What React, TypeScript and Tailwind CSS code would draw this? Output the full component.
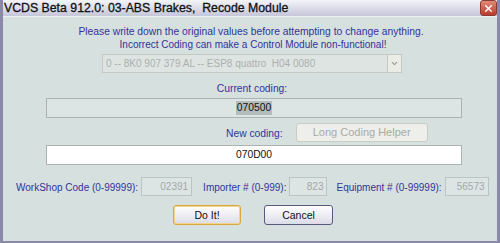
import { ChevronDown, X } from "lucide-react"

const field = "h-[19px] shrink-0 border border-[#b9c4c3] bg-[#dde5e4] pr-[3px] text-right text-[10px] leading-[17px] text-[#a3a8a8]"

export default function App() {
  return (
    <div className="flex h-[243px] w-[500px] flex-col overflow-hidden border-x-[3px] border-b-[2px] border-[#8a8aa8] bg-[#d6e0df] font-['Liberation_Sans',Arial,sans-serif]">
      {/* title bar */}
      <div className="flex h-[17px] shrink-0 items-center justify-between border-b border-[#eef0f4] bg-gradient-to-b from-[#f4f4fa] to-[#c6c6da]">
        <span className="pl-[1px] text-[12.3px] leading-none text-[#111] [-webkit-text-stroke:0.3px_#111]">
          VCDS Beta 912.0: 03-ABS Brakes,&nbsp; Recode Module
        </span>
        <div className="flex h-[16px] w-[17px] items-center justify-center rounded-[3px] border border-[#8a3a32] bg-gradient-to-b from-[#e08a78] to-[#b8392a]">
          <X className="h-[11px] w-[11px] text-white" strokeWidth={3} />
        </div>
      </div>

      <div className="flex flex-1 flex-col whitespace-nowrap text-[10.3px] text-[#33339a]">
        <p className="mt-[8px] pl-[2px] text-center leading-[13px]">
          Please write down the original values before attempting to change anything.
        </p>
        <p className="pl-[6px] text-center text-[10px] leading-[13px]">
          Incorrect Coding can make a Control Module non-functional!
        </p>

        {/* dropdown */}
        <div className="ml-[99px] mt-[3px] flex h-[19px] w-[300px] border border-[#c4c9c3] bg-[#dee4e2]">
          <span className="flex-1 pl-[3px] text-[10px] leading-[17px] text-[#acb0ad]">
            0 -- 8K0 907 379 AL -- ESP8 quattro&nbsp; H04 0080
          </span>
          <div className="flex w-[14px] items-center justify-center border-l border-[#c4c9c3] bg-[#ecece6]">
            <ChevronDown className="h-[9px] w-[9px] text-[#9a9a9a]" strokeWidth={3} />
          </div>
        </div>

        <p className="mt-[9px] pl-[4px] text-center leading-[13px]">Current coding:</p>
        <div className="ml-[43px] mt-[3px] flex h-[20px] w-[416px] items-center justify-center border border-[#aab3b2] bg-[#dde5e4]">
          <span className="bg-[#b3bcbb] px-[1px] leading-[14px] text-[#111]">070500</span>
        </div>

        <div className="mt-[5px] flex items-center">
          <span className="ml-[223px] mt-[1px] leading-[13px]">New coding:</span>
          <div className="ml-[13px] flex h-[19px] w-[132px] items-center justify-center rounded-[3px] border border-[#c8ccc4] bg-[#eeeeea] text-[11px] text-[#a8aaa6]">
            Long Coding Helper
          </div>
        </div>
        <div className="ml-[43px] mt-[3px] flex h-[20px] w-[416px] items-center justify-center border border-[#aab3b2] bg-white">
          <span className="leading-[14px] text-[#111]">070D00</span>
        </div>

        {/* numeric fields */}
        <div className="mt-[12px] flex items-center text-[10px]">
          <span className="ml-[13px] mt-[2px]">WorkShop Code (0-99999):</span>
          <div className={`ml-[3px] w-[51px] ${field}`}>02391</div>
          <span className="ml-[11px] mt-[2px]">Importer # (0-999):</span>
          <div className={`ml-[3px] w-[38px] ${field}`}>823</div>
          <span className="ml-[9px] mt-[2px]">Equipment # (0-99999):</span>
          <div className={`ml-[3px] w-[44px] ${field}`}>56573</div>
        </div>

        {/* buttons */}
        <div className="mt-[9px] flex">
          <button className="ml-[170px] h-[20px] w-[68px] rounded-[3px] border border-[#d8a83a] bg-gradient-to-b from-white to-[#dcdce8] text-[10.5px] leading-none text-[#111] shadow-[inset_0_0_0_1px_#f2d48a]">
            Do It!
          </button>
          <button className="ml-[23px] h-[20px] w-[69px] rounded-[3px] border border-[#5a5a80] bg-gradient-to-b from-white to-[#dcdce8] text-[10.5px] leading-none text-[#111]">
            Cancel
          </button>
        </div>
      </div>
    </div>
  )
}
